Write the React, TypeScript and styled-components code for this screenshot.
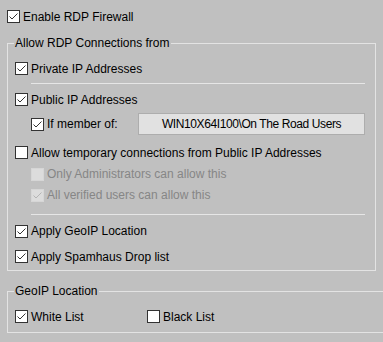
import React from 'react';
import styled, { createGlobalStyle } from 'styled-components';

const GlobalStyle = createGlobalStyle`
  html, body {
    margin: 0;
    padding: 0;
    background: #c0c0c0;
    overflow: hidden;
  }
  body {
    font-family: "Liberation Sans", Arial, sans-serif;
    font-size: 12px;
    color: #000;
  }
`;

const Page = styled.div`
  width: 383px;
  height: 342px;
  box-sizing: border-box;
  padding: 4px 0 0 7px;
  overflow: hidden;
`;

const Row = styled.label<{ $indent?: number; $height?: number; $disabled?: boolean }>`
  display: flex;
  align-items: center;
  gap: 3px;
  height: ${(p) => p.$height ?? 25}px;
  margin-left: ${(p) => p.$indent ?? 0}px;
  color: ${(p) => (p.$disabled ? '#868686' : '#000')};
  white-space: nowrap;
`;

const Box = styled.span<{ $disabled?: boolean }>`
  flex: none;
  width: 13px;
  height: 13px;
  box-sizing: border-box;
  border: 1px solid ${(p) => (p.$disabled ? '#d6d6d6' : '#333')};
  background: ${(p) => (p.$disabled ? '#dcdcdc' : '#fff')};
  display: flex;
`;

const Group = styled.fieldset<{ $width: number; $top: number }>`
  margin: ${(p) => p.$top}px 0 0;
  padding: 6px 7px 1px;
  width: ${(p) => p.$width}px;
  box-sizing: border-box;
  min-width: 0;
  border: 1px solid #e3e3e3;
`;

const Legend = styled.legend`
  padding: 0 1px;
  margin-left: -1px;
  line-height: 14px;
  font-size: 12px;
`;

const Rule = styled.div<{ $top: number }>`
  height: 1px;
  background: #e6e6e6;
  margin: ${(p) => p.$top}px 3px 3px 16px;
`;

const MemberRow = styled.div`
  display: flex;
  align-items: center;
  height: 24px;
  margin: 0 3px 5px 16px;
`;

const MemberLabel = styled(Row)`
  width: 107px;
`;

const GroupButton = styled.div`
  flex: 1;
  height: 22px;
  box-sizing: border-box;
  border: 1px solid #adadad;
  background: #e1e1e1;
  display: flex;
  align-items: center;
  justify-content: center;
  white-space: nowrap;
  letter-spacing: -0.4px;
`;

const ListRow = styled.div`
  display: grid;
  grid-template-columns: 132px auto;
  height: 25px;
  align-items: center;
  margin-bottom: 2px;
`;

type CheckProps = {
  label: string;
  checked?: boolean;
  disabled?: boolean;
  indent?: number;
  height?: number;
};

const Check = ({ label, checked, disabled, indent, height }: CheckProps) => (
  <Row $indent={indent} $height={height} $disabled={disabled}>
    <Tick checked={checked} disabled={disabled} />
    {label}
  </Row>
);

const Tick = ({ checked, disabled }: { checked?: boolean; disabled?: boolean }) => (
  <Box $disabled={disabled}>
    {checked && (
      <svg width="11" height="11" viewBox="0 0 11 11">
        <polyline
          points="1.5,5.5 4,8 9.5,2.5"
          fill="none"
          stroke={disabled ? '#b4b4b4' : '#333'}
          strokeWidth="1"
        />
      </svg>
    )}
  </Box>
);

export default function App() {
  return (
    <Page>
      <GlobalStyle />
      <Check label="Enable RDP Firewall" checked />
      <Group $width={369} $top={7}>
        <Legend>Allow RDP Connections from</Legend>
        <Check label="Private IP Addresses" checked />
        <Rule $top={2} />
        <Check label="Public IP Addresses" checked />
        <MemberRow>
          <MemberLabel $height={24}>
            <Tick checked />
            If member of:
          </MemberLabel>
          <GroupButton>WIN10X64I100\On The Road Users</GroupButton>
        </MemberRow>
        <Check label="Allow temporary connections from Public IP Addresses" height={23} />
        <Check label="Only Administrators can allow this" disabled indent={16} height={20} />
        <Check label="All verified users can allow this" checked disabled indent={16} height={22} />
        <Rule $top={8} />
        <Check label="Apply GeoIP Location" checked height={26} />
        <Check label="Apply Spamhaus Drop list" checked />
      </Group>
      <Group $width={420} $top={13}>
        <Legend>GeoIP Location</Legend>
        <ListRow>
          <Check label="White List" checked />
          <Check label="Black List" />
        </ListRow>
      </Group>
    </Page>
  );
}
